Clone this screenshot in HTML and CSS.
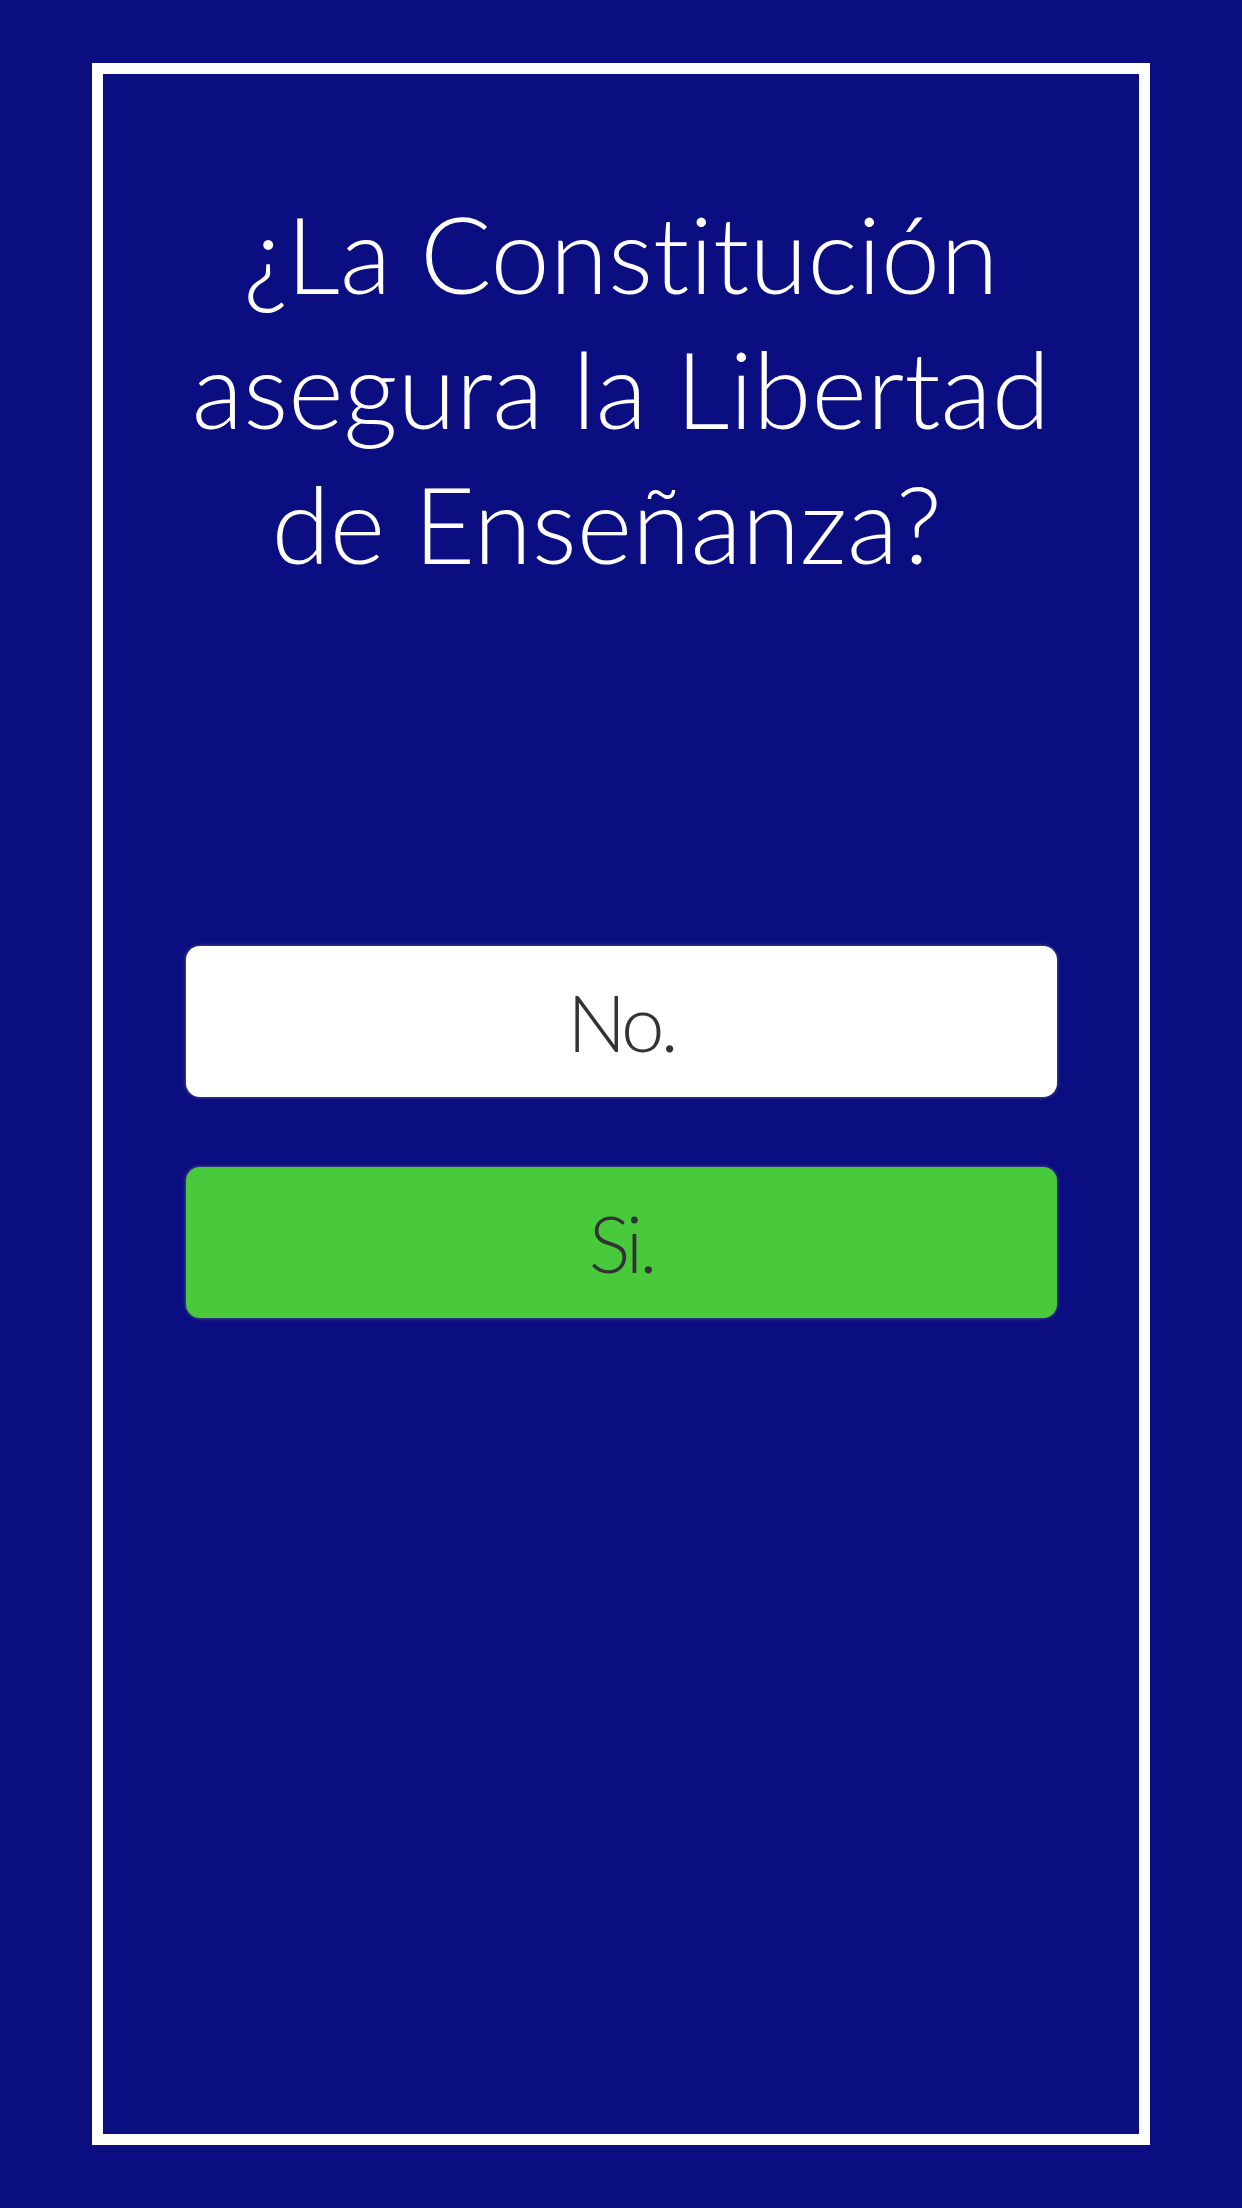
FILE: index.html
```html
<!DOCTYPE html>
<html lang="es">
<head>
<meta charset="utf-8">
<title>Pregunta</title>
<link rel="stylesheet" href="styles.css">
</head>
<body>
<main class="frame">
  <h1 class="question">¿La Constitución<br>asegura la Libertad<br>de Enseñanza?&nbsp;</h1>
  <div class="answers">
    <button class="answer answer-no">No.</button>
    <button class="answer answer-yes">Si.</button>
  </div>
</main>
</body>
</html>
```
FILE: styles.css
```css
html, body {
  margin: 0;
  padding: 0;
  background: #0b0e80;
}
body {
  padding: 63px 92px 0 92px;
  height: 2208px;
  box-sizing: border-box;
  overflow: hidden;
}
.frame {
  box-sizing: border-box;
  width: 1058px;
  height: 2082px;
  border: 11px solid #ffffff;
  display: flex;
  flex-direction: column;
  align-items: center;
}
.question {
  margin: 112px 0 0 0;
  color: #ffffff;
  font-family: Lato, "Open Sans", sans-serif;
  font-weight: 300;
  font-size: 106px;
  line-height: 135px;
  text-align: center;
  font-variant-ligatures: none;
}
.answers {
  margin-top: 355px;
  width: 871px;
  display: flex;
  flex-direction: column;
  gap: 70px;
}
.answer {
  display: block;
  width: 100%;
  height: 151px;
  border: none;
  border-radius: 14px;
  font-family: Lato, "Open Sans", sans-serif;
  font-weight: 300;
  font-size: 78px;
  letter-spacing: -4px;
  color: #333333;
  padding: 0;
  box-shadow: 0 0 3px 1px rgba(120,120,140,0.5);
}
.answer-no {
  background: #ffffff;
}
.answer-yes {
  background: #49ca3d;
}
```
